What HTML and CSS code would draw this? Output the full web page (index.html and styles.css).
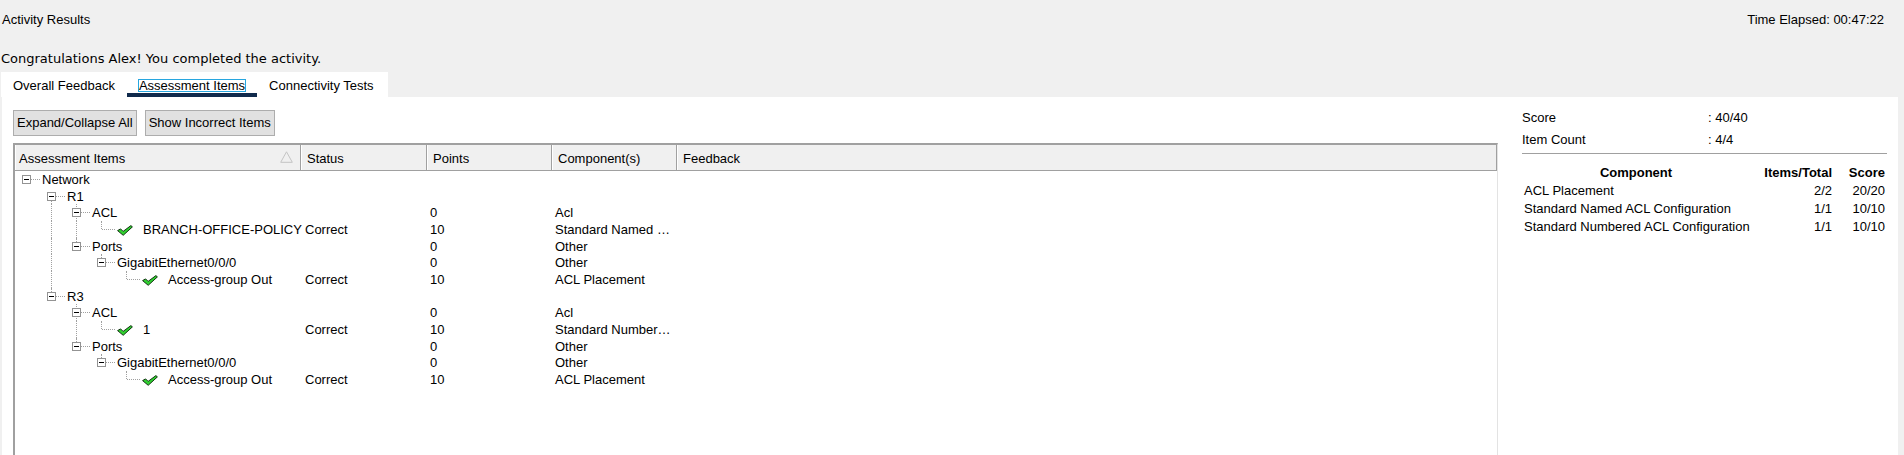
FILE: index.html
```html
<!DOCTYPE html>
<html lang="en">
<head>
<meta charset="utf-8">
<title>Activity Results</title>
<link rel="stylesheet" href="styles.css">
</head>
<body>
<div class="topbar">
  <span>Activity Results</span>
  <span>Time Elapsed: 00:47:22</span>
</div>
<div class="congrats">Congratulations Alex! You completed the activity.</div>
<div class="tabs">
  <div class="tab"><span class="lbl">Overall Feedback</span></div>
  <div class="tab active"><span class="lbl">Assessment Items</span></div>
  <div class="tab"><span class="lbl">Connectivity Tests</span></div>
</div>
<div class="panel">
  <div class="left">
    <div class="buttons">
      <button class="btn">Expand/Collapse All</button>
      <button class="btn">Show Incorrect Items</button>
    </div>
    <div class="grid">
      <div class="ghead">
        <div class="hc first">Assessment Items
          <svg class="sort" width="13" height="12" viewBox="0 0 13 12"><path d="M6.5 0.8 L12.3 11.3 L0.7 11.3 Z" fill="none" stroke="#c4c4c4" stroke-width="1"/></svg>
        </div>
        <div class="hc">Status</div>
        <div class="hc">Points</div>
        <div class="hc">Component(s)</div>
        <div class="hc last">Feedback</div>
      </div>

      <div class="row">
        <div class="tree"><span class="s h"><b class="box"></b></span><span class="txt">Network</span></div>
        <div class="c st"></div><div class="c"></div><div class="c"></div><div class="c"></div>
      </div>
      <div class="row">
        <div class="tree"><span class="s"></span><span class="s h down"><b class="box"></b></span><span class="txt">R1</span></div>
        <div class="c st"></div><div class="c"></div><div class="c"></div><div class="c"></div>
      </div>
      <div class="row">
        <div class="tree"><span class="s"></span><span class="s v"></span><span class="s h v"><b class="box"></b></span><span class="txt">ACL</span></div>
        <div class="c st"></div><div class="c">0</div><div class="c">Acl</div><div class="c"></div>
      </div>
      <div class="row">
        <div class="tree"><span class="s"></span><span class="s v"></span><span class="s v"></span><span class="s h up"></span><svg class="chk" width="16" height="11" viewBox="0 0 16 11"><path d="M0.6 5.6 L3.6 3.9 L6.1 6.4 L13.9 0.6 L15.4 1.9 L6.2 10.3 Z" fill="#2fd12f" stroke="#123312" stroke-width="1" stroke-linejoin="round"/></svg><span class="txt leaf">BRANCH-OFFICE-POLICY</span></div>
        <div class="c st">Correct</div><div class="c">10</div><div class="c">Standard Named …</div><div class="c"></div>
      </div>
      <div class="row">
        <div class="tree"><span class="s"></span><span class="s v"></span><span class="s h up"><b class="box"></b></span><span class="txt">Ports</span></div>
        <div class="c st"></div><div class="c">0</div><div class="c">Other</div><div class="c"></div>
      </div>
      <div class="row">
        <div class="tree"><span class="s"></span><span class="s v"></span><span class="s"></span><span class="s h up"><b class="box"></b></span><span class="txt">GigabitEthernet0/0/0</span></div>
        <div class="c st"></div><div class="c">0</div><div class="c">Other</div><div class="c"></div>
      </div>
      <div class="row">
        <div class="tree"><span class="s"></span><span class="s v"></span><span class="s"></span><span class="s"></span><span class="s h up"></span><svg class="chk" width="16" height="11" viewBox="0 0 16 11"><path d="M0.6 5.6 L3.6 3.9 L6.1 6.4 L13.9 0.6 L15.4 1.9 L6.2 10.3 Z" fill="#2fd12f" stroke="#123312" stroke-width="1" stroke-linejoin="round"/></svg><span class="txt leaf">Access-group Out</span></div>
        <div class="c st">Correct</div><div class="c">10</div><div class="c">ACL Placement</div><div class="c"></div>
      </div>
      <div class="row">
        <div class="tree"><span class="s"></span><span class="s h up"><b class="box"></b></span><span class="txt">R3</span></div>
        <div class="c st"></div><div class="c"></div><div class="c"></div><div class="c"></div>
      </div>
      <div class="row">
        <div class="tree"><span class="s"></span><span class="s"></span><span class="s h v"><b class="box"></b></span><span class="txt">ACL</span></div>
        <div class="c st"></div><div class="c">0</div><div class="c">Acl</div><div class="c"></div>
      </div>
      <div class="row">
        <div class="tree"><span class="s"></span><span class="s"></span><span class="s v"></span><span class="s h up"></span><svg class="chk" width="16" height="11" viewBox="0 0 16 11"><path d="M0.6 5.6 L3.6 3.9 L6.1 6.4 L13.9 0.6 L15.4 1.9 L6.2 10.3 Z" fill="#2fd12f" stroke="#123312" stroke-width="1" stroke-linejoin="round"/></svg><span class="txt leaf">1</span></div>
        <div class="c st">Correct</div><div class="c">10</div><div class="c">Standard Number…</div><div class="c"></div>
      </div>
      <div class="row">
        <div class="tree"><span class="s"></span><span class="s"></span><span class="s h up"><b class="box"></b></span><span class="txt">Ports</span></div>
        <div class="c st"></div><div class="c">0</div><div class="c">Other</div><div class="c"></div>
      </div>
      <div class="row">
        <div class="tree"><span class="s"></span><span class="s"></span><span class="s"></span><span class="s h up"><b class="box"></b></span><span class="txt">GigabitEthernet0/0/0</span></div>
        <div class="c st"></div><div class="c">0</div><div class="c">Other</div><div class="c"></div>
      </div>
      <div class="row">
        <div class="tree"><span class="s"></span><span class="s"></span><span class="s"></span><span class="s"></span><span class="s h up"></span><svg class="chk" width="16" height="11" viewBox="0 0 16 11"><path d="M0.6 5.6 L3.6 3.9 L6.1 6.4 L13.9 0.6 L15.4 1.9 L6.2 10.3 Z" fill="#2fd12f" stroke="#123312" stroke-width="1" stroke-linejoin="round"/></svg><span class="txt leaf">Access-group Out</span></div>
        <div class="c st">Correct</div><div class="c">10</div><div class="c">ACL Placement</div><div class="c"></div>
      </div>
    </div>
  </div>
  <div class="right">
    <div class="stat"><span class="k">Score</span><span>: 40/40</span></div>
    <div class="stat"><span class="k">Item Count</span><span>: 4/4</span></div>
    <div class="sep"></div>
    <div class="comp">
      <div class="ch name">Component</div><div class="ch num">Items/Total</div><div class="ch num">Score</div>
      <div class="cn">ACL Placement</div><div class="num">2/2</div><div class="num">20/20</div>
      <div class="cn">Standard Named ACL Configuration</div><div class="num">1/1</div><div class="num">10/10</div>
      <div class="cn">Standard Numbered ACL Configuration</div><div class="num">1/1</div><div class="num">10/10</div>
    </div>
  </div>
</div>
</body>
</html>
```
FILE: styles.css
```css
html, body {
  margin: 0;
  padding: 0;
}
body {
  width: 1904px;
  height: 455px;
  overflow: hidden;
  background: #f0f0f0;
  font-family: "Liberation Sans", Arial, sans-serif;
  font-size: 13px;
  color: #000;
  display: flex;
  flex-direction: column;
}
.topbar {
  height: 39px;
  flex: none;
  display: flex;
  justify-content: space-between;
  align-items: center;
  padding: 0 20px 0 2px;
}
.congrats {
  flex: none;
  margin-top: 12px;
  height: 16px;
  line-height: 16px;
  padding-left: 1px;
  font-family: "DejaVu Sans", Verdana, sans-serif;
  font-size: 13px;
}
.tabs {
  flex: none;
  margin: 5px 0 0 1px;
  display: flex;
  align-self: flex-start;
  background: #fff;
  height: 25px;
  padding-right: 2px;
}
.tab {
  box-sizing: border-box;
  height: 25px;
  padding: 7px 11px 0;
}
.tab .lbl {
  display: block;
  height: 13px;
  box-sizing: border-box;
  line-height: 11px;
  border: 1px solid transparent;
  white-space: nowrap;
}
.tab.active {
  border-bottom: 4px solid #102a4c;
}
.tab.active .lbl {
  border-color: #27a6df;
}
.panel {
  flex: 1;
  min-height: 0;
  display: flex;
  background: #fff;
  margin: 0 6px 0 2px;
}
.left {
  width: 1496px;
  flex: none;
  box-sizing: border-box;
  padding: 13px 0 0 11px;
  display: flex;
  flex-direction: column;
}
.buttons {
  display: flex;
  gap: 8px;
}
.btn {
  height: 26px;
  box-sizing: border-box;
  border: 1px solid #adadad;
  background: #e1e1e1;
  padding: 0 3px;
  margin: 0;
  font: inherit;
  color: #000;
  line-height: 24px;
  border-radius: 0;
}
.grid {
  margin-top: 7px;
  flex: 1;
  border-top: 2px solid #a0a0a0;
  border-left: 2px solid #a0a0a0;
  border-right: 1px solid #e3e3e3;
}
.ghead,
.row {
  display: grid;
  grid-template-columns: 286px 126px 125px 125px 1fr;
}
.ghead {
  height: 26px;
  box-sizing: border-box;
  border-bottom: 1px solid #a0a0a0;
  background: #f0f0f0;
}
.hc {
  box-sizing: border-box;
  border-right: 1px solid #a0a0a0;
  box-shadow: inset 1px 0 0 #fff;
  padding: 2px 0 0 6px;
  line-height: 23px;
  white-space: nowrap;
}
.hc.first {
  padding-left: 4px;
  display: flex;
  justify-content: space-between;
  align-items: center;
  padding-right: 7px;
}
.hc.last {
  border-right: 1px solid #a0a0a0;
}
.sort {
  display: block;
  margin-top: -3px;
}
.row {
  height: 16.667px;
  line-height: 16.667px;
}
.c {
  padding: 1px 0 0 3px;
  white-space: nowrap;
}
.c.st {
  padding-left: 4px;
}
.tree {
  display: flex;
  align-items: flex-start;
  height: 16.667px;
  white-space: nowrap;
}
.s {
  flex: none;
  width: 25px;
  height: 100%;
  position: relative;
}
.s.v::before,
.s.up::before,
.s.down::before {
  content: "";
  position: absolute;
  left: 11px;
  top: 0;
  bottom: 0;
  border-left: 1px dotted #a0a0a0;
}
.s.up::before {
  bottom: auto;
  height: 8px;
}
.s.down::before {
  top: 8px;
}
.s.h::after {
  content: "";
  position: absolute;
  left: 12px;
  right: 0;
  top: 8px;
  border-top: 1px dotted #a0a0a0;
}
.box {
  position: absolute;
  left: 7px;
  top: 4px;
  width: 9px;
  height: 9px;
  box-sizing: border-box;
  border: 1px solid #939393;
  background: #fff;
  z-index: 1;
}
.box::after {
  content: "";
  position: absolute;
  left: 1px;
  top: 3px;
  width: 5px;
  height: 1px;
  background: #000;
}
.txt {
  margin-left: 2px;
  padding-top: 1px;
}
.chk {
  flex: none;
  display: block;
  margin: 4px 10px 0 2px;
}
.txt.leaf {
  margin-left: 0;
}
.right {
  flex: 1;
  box-sizing: border-box;
  padding: 10px 13px 0 24px;
}
.stat {
  display: flex;
  height: 22px;
  line-height: 22px;
}
.stat .k {
  width: 186px;
}
.sep {
  margin: 2px -2px 0 0;
  border-top: 1px solid #a0a0a0;
}
.comp {
  margin-top: 10px;
  display: grid;
  grid-template-columns: 228px 82px 53px;
  grid-auto-rows: 18px;
  line-height: 18px;
  white-space: nowrap;
}
.ch {
  font-weight: bold;
}
.ch.name {
  text-align: center;
}
.num {
  text-align: right;
}
.cn {
  padding-left: 2px;
}
```
